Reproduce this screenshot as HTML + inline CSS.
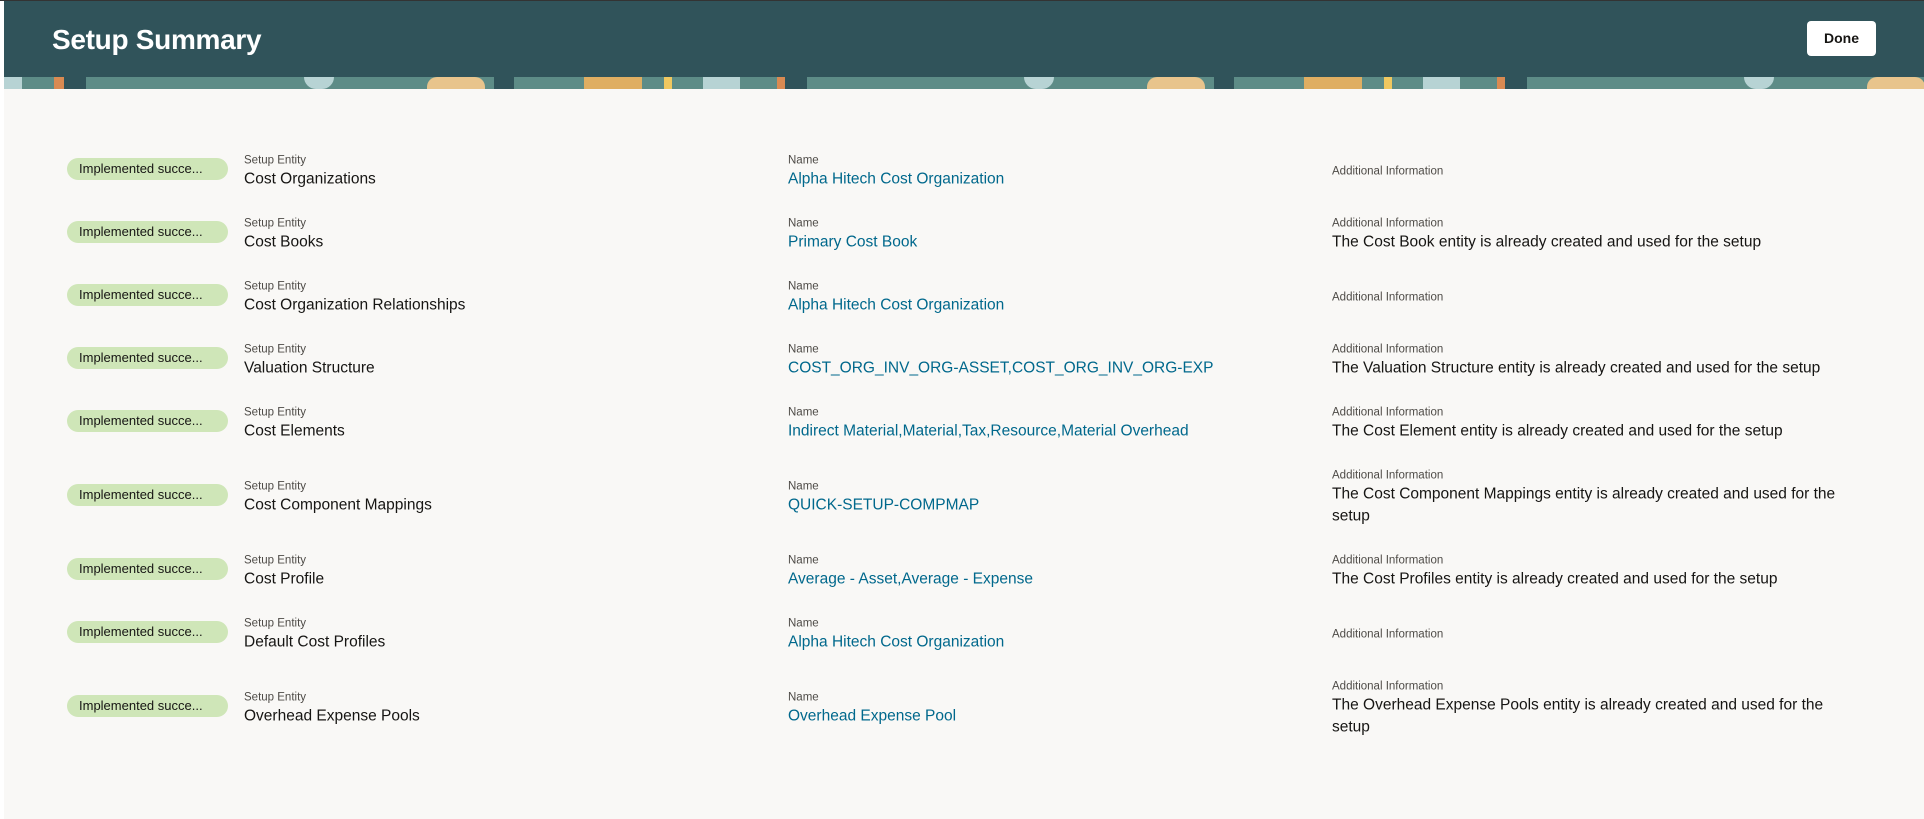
<!DOCTYPE html>
<html><head><meta charset="utf-8">
<style>
*{margin:0;padding:0;box-sizing:border-box}
body{width:1924px;height:819px;overflow:hidden;background:#f9f8f6;font-family:"Liberation Sans",sans-serif;position:relative}
.hdr{position:absolute;left:4px;right:0;top:1px;height:76px;background:#30535a}
.topline{position:absolute;left:0;right:0;top:0;height:1px;background:#333}
.leftb{position:absolute;left:0;top:0;width:4px;height:819px;background:#fff}
h1{position:absolute;left:52px;top:24px;color:#fff;font-size:28px;font-weight:bold;letter-spacing:-0.3px}
.done{position:absolute;left:1807px;top:21px;width:69px;height:35px;background:#fff;border-radius:4px;font-size:14px;font-weight:bold;color:#161513;text-align:center;line-height:35px}
.strip{position:absolute;left:4px;right:0;top:77px;height:12px;background:#5d8c87;overflow:hidden}
.strip div{position:absolute;top:0;height:12px}
.row{position:absolute;left:0;width:1924px;transform:translateY(-50%);display:flex;align-items:center}
.pill{position:absolute;left:67px;width:161px;height:22px;border-radius:11px;background:#cfe6b8;font-size:13px;line-height:22px;color:#161513;padding-left:12px;top:50%;margin-top:-10px}
.col{position:absolute;top:50%;transform:translateY(-50%);margin-top:4px}
.lbl{font-size:11.5px;color:#4e4b47;line-height:15px}
.val{font-size:15.5px;color:#161513;line-height:22px;white-space:nowrap}
.lnk{color:#00688c}
</style></head><body>
<div class="leftb"></div>
<div class="hdr"></div><div class="topline"></div>
<h1>Setup Summary</h1>
<div class="done">Done</div>
<div class="strip">
<div style="left:0;width:18px;background:#b7d3d4"></div>
<div style="left:50px;width:10px;background:#d98a52"></div>
<div style="left:60px;width:22px;background:#30535a"></div>
<div style="left:300px;width:30px;background:#b7d3d4;border-radius:0 0 12px 12px"></div>
<div style="left:423px;width:58px;background:#e8c48c;border-radius:10px 10px 0 0"></div>
<div style="left:490px;width:20px;background:#30535a"></div>
<div style="left:580px;width:58px;background:#dfae62"></div>
<div style="left:660px;width:8px;background:#f0c860"></div>
<div style="left:699px;width:37px;background:#b7d3d4"></div>
<div style="left:773px;width:8px;background:#d98a52"></div>
<div style="left:781px;width:22px;background:#30535a"></div>
<div style="left:1020px;width:30px;background:#b7d3d4;border-radius:0 0 12px 12px"></div>
<div style="left:1143px;width:58px;background:#e8c48c;border-radius:10px 10px 0 0"></div>
<div style="left:1210px;width:20px;background:#30535a"></div>
<div style="left:1300px;width:58px;background:#dfae62"></div>
<div style="left:1380px;width:8px;background:#f0c860"></div>
<div style="left:1419px;width:37px;background:#b7d3d4"></div>
<div style="left:1493px;width:8px;background:#d98a52"></div>
<div style="left:1501px;width:22px;background:#30535a"></div>
<div style="left:1740px;width:30px;background:#b7d3d4;border-radius:0 0 12px 12px"></div>
<div style="left:1863px;width:58px;background:#e8c48c;border-radius:10px 10px 0 0"></div>
</div>

<div class="row" style="top:168px;height:60px"><div class="pill">Implemented succe...</div>
<div class="col" style="left:244px"><div class="lbl">Setup Entity</div><div class="val">Cost Organizations</div></div>
<div class="col" style="left:788px"><div class="lbl">Name</div><div class="val lnk">Alpha Hitech Cost Organization</div></div>
<div class="col" style="left:1332px"><div class="lbl">Additional Information</div></div></div>

<div class="row" style="top:231px;height:60px"><div class="pill">Implemented succe...</div>
<div class="col" style="left:244px"><div class="lbl">Setup Entity</div><div class="val">Cost Books</div></div>
<div class="col" style="left:788px"><div class="lbl">Name</div><div class="val lnk">Primary Cost Book</div></div>
<div class="col" style="left:1332px"><div class="lbl">Additional Information</div><div class="val">The Cost Book entity is already created and used for the setup</div></div></div>

<div class="row" style="top:294px;height:60px"><div class="pill">Implemented succe...</div>
<div class="col" style="left:244px"><div class="lbl">Setup Entity</div><div class="val">Cost Organization Relationships</div></div>
<div class="col" style="left:788px"><div class="lbl">Name</div><div class="val lnk">Alpha Hitech Cost Organization</div></div>
<div class="col" style="left:1332px"><div class="lbl">Additional Information</div></div></div>

<div class="row" style="top:357px;height:60px"><div class="pill">Implemented succe...</div>
<div class="col" style="left:244px"><div class="lbl">Setup Entity</div><div class="val">Valuation Structure</div></div>
<div class="col" style="left:788px"><div class="lbl">Name</div><div class="val lnk">COST_ORG_INV_ORG-ASSET,COST_ORG_INV_ORG-EXP</div></div>
<div class="col" style="left:1332px"><div class="lbl">Additional Information</div><div class="val">The Valuation Structure entity is already created and used for the setup</div></div></div>

<div class="row" style="top:420px;height:60px"><div class="pill">Implemented succe...</div>
<div class="col" style="left:244px"><div class="lbl">Setup Entity</div><div class="val">Cost Elements</div></div>
<div class="col" style="left:788px"><div class="lbl">Name</div><div class="val lnk">Indirect Material,Material,Tax,Resource,Material Overhead</div></div>
<div class="col" style="left:1332px"><div class="lbl">Additional Information</div><div class="val">The Cost Element entity is already created and used for the setup</div></div></div>

<div class="row" style="top:494px;height:80px"><div class="pill">Implemented succe...</div>
<div class="col" style="left:244px"><div class="lbl">Setup Entity</div><div class="val">Cost Component Mappings</div></div>
<div class="col" style="left:788px"><div class="lbl">Name</div><div class="val lnk">QUICK-SETUP-COMPMAP</div></div>
<div class="col" style="left:1332px"><div class="lbl">Additional Information</div><div class="val">The Cost Component Mappings entity is already created and used for the<br>setup</div></div></div>

<div class="row" style="top:568px;height:60px"><div class="pill">Implemented succe...</div>
<div class="col" style="left:244px"><div class="lbl">Setup Entity</div><div class="val">Cost Profile</div></div>
<div class="col" style="left:788px"><div class="lbl">Name</div><div class="val lnk">Average - Asset,Average - Expense</div></div>
<div class="col" style="left:1332px"><div class="lbl">Additional Information</div><div class="val">The Cost Profiles entity is already created and used for the setup</div></div></div>

<div class="row" style="top:631px;height:60px"><div class="pill">Implemented succe...</div>
<div class="col" style="left:244px"><div class="lbl">Setup Entity</div><div class="val">Default Cost Profiles</div></div>
<div class="col" style="left:788px"><div class="lbl">Name</div><div class="val lnk">Alpha Hitech Cost Organization</div></div>
<div class="col" style="left:1332px"><div class="lbl">Additional Information</div></div></div>

<div class="row" style="top:705px;height:80px"><div class="pill">Implemented succe...</div>
<div class="col" style="left:244px"><div class="lbl">Setup Entity</div><div class="val">Overhead Expense Pools</div></div>
<div class="col" style="left:788px"><div class="lbl">Name</div><div class="val lnk">Overhead Expense Pool</div></div>
<div class="col" style="left:1332px"><div class="lbl">Additional Information</div><div class="val">The Overhead Expense Pools entity is already created and used for the<br>setup</div></div></div>
</body></html>
